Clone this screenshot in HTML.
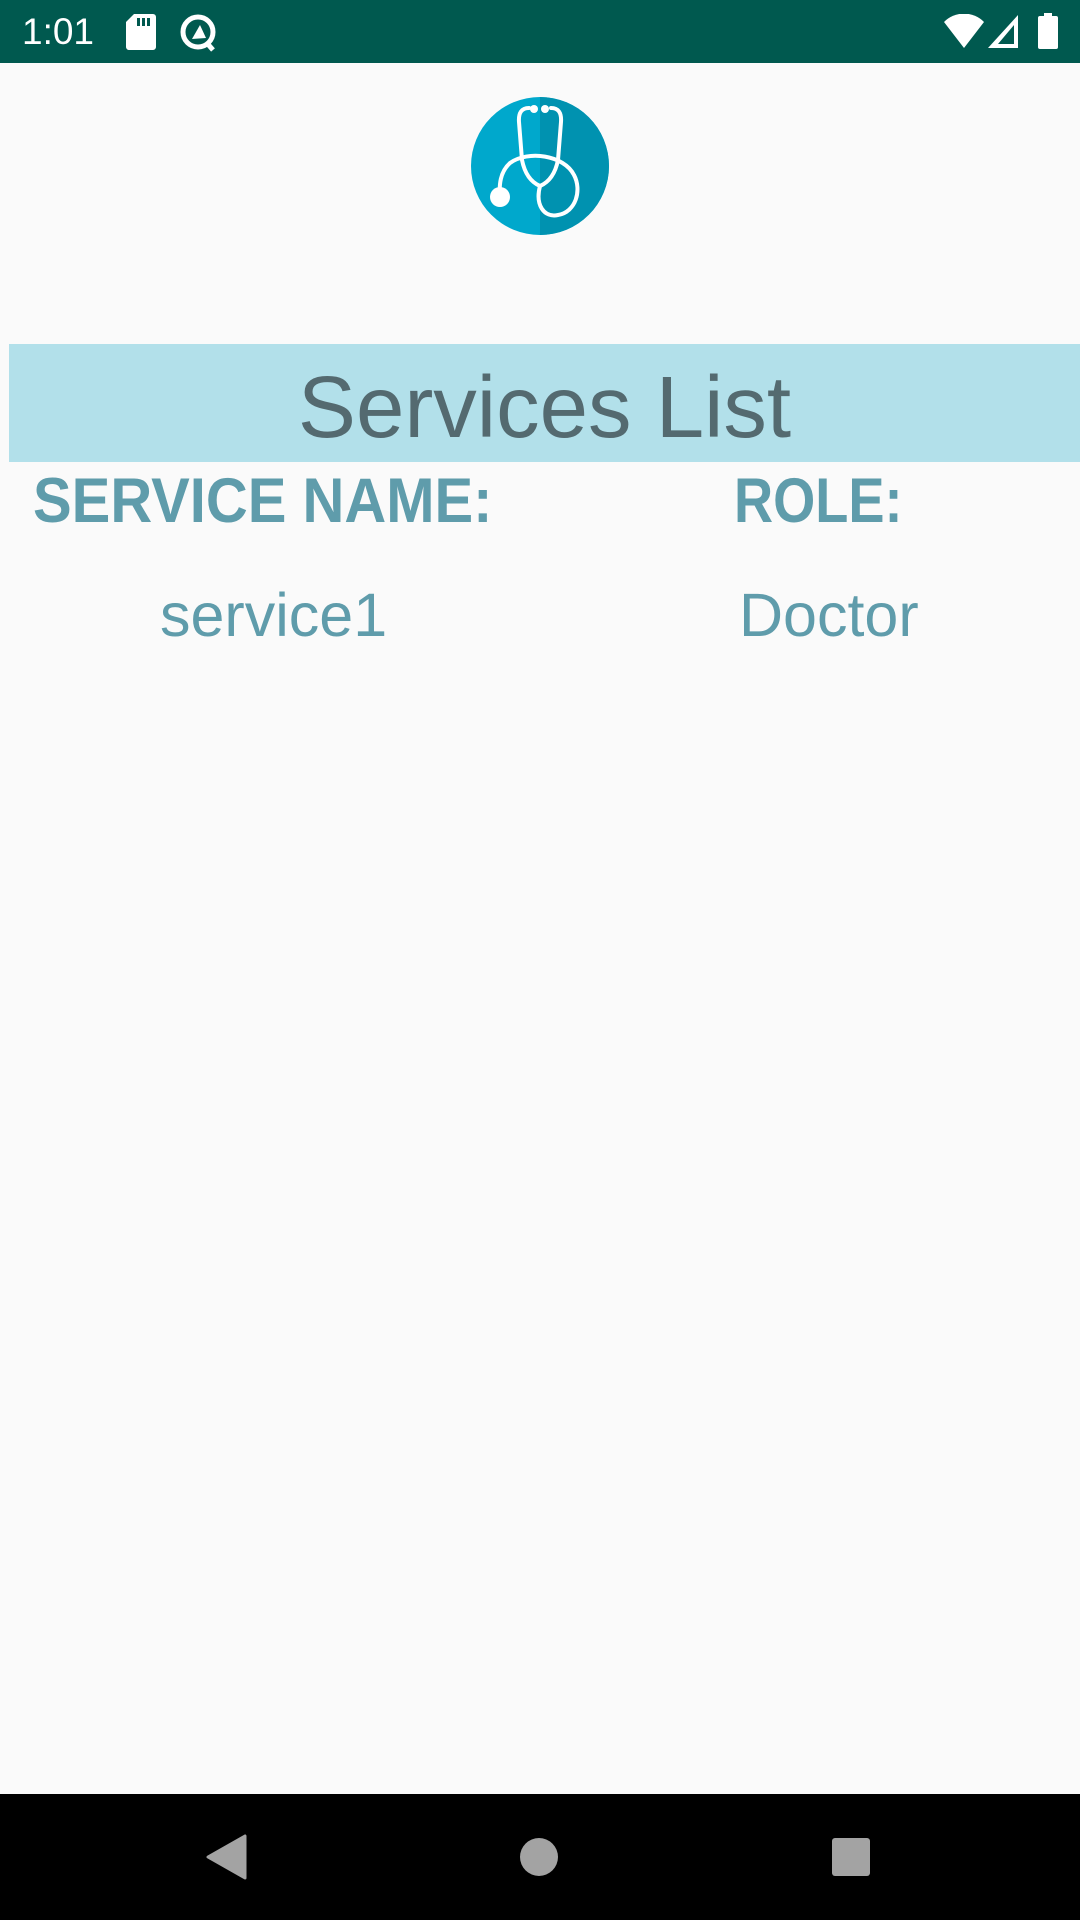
<!DOCTYPE html>
<html><head><meta charset="utf-8"><style>
html,body{margin:0;padding:0;}
body{width:1080px;height:1920px;background:#fafafa;position:relative;overflow:hidden;font-family:"Liberation Sans",sans-serif;}
.sb{position:absolute;left:0;top:0;width:1080px;height:63px;background:#00594f;}
.t{position:absolute;white-space:nowrap;line-height:1;}
.banner{position:absolute;left:9px;top:344px;width:1071px;height:118px;background:#b2e0ea;}
.nav{position:absolute;left:0;top:1794px;width:1080px;height:126px;background:#000;}
</style></head><body>
<div class="sb">
  <div class="t" style="left:22px;top:13px;font-size:37px;color:#fff;">1:01</div>
  <svg style="position:absolute;left:126px;top:14px" width="30" height="36" viewBox="0 0 30 36"><path d="M8 0H27a3 3 0 0 1 3 3V33a3 3 0 0 1-3 3H3a3 3 0 0 1-3-3V8Z" fill="#fff"/><rect x="11" y="4" width="3" height="8" fill="#00594f"/><rect x="16" y="4" width="3" height="8" fill="#00594f"/><rect x="21" y="4" width="3" height="8" fill="#00594f"/></svg>
  <svg style="position:absolute;left:178px;top:12px" width="40" height="40" viewBox="0 0 40 40"><circle cx="20" cy="20" r="15" fill="none" stroke="#fff" stroke-width="5"/><path d="M14 27L22 13L28 26Z" fill="#fff"/><path d="M28 30L35 38" stroke="#fff" stroke-width="5"/></svg>
  <svg style="position:absolute;left:944px;top:14px" width="40" height="34" viewBox="0 0 40 34"><path d="M0 8A28 28 0 0 1 40 8L20 34Z" fill="#fff"/></svg>
  <svg style="position:absolute;left:988px;top:15px" width="30" height="33" viewBox="0 0 30 33"><path d="M30 0V33H0Z" fill="#fff"/><path d="M26 10V29H10Z" fill="#00594f"/></svg>
  <svg style="position:absolute;left:1038px;top:13px" width="20" height="36" viewBox="0 0 20 36"><rect x="6" y="0" width="8" height="4" fill="#fff"/><rect x="0" y="3" width="20" height="33" rx="2" fill="#fff"/></svg>
</div>

<svg style="position:absolute;left:0;top:0" width="1080" height="300" viewBox="0 0 1080 300">
  <defs><clipPath id="c"><circle cx="540" cy="166" r="69"/></clipPath></defs>
  <circle cx="540" cy="166" r="69" fill="#00a8cc"/>
  <rect x="540" y="90" width="80" height="160" fill="#0092b0" clip-path="url(#c)"/>
  <circle cx="534" cy="109" r="4" fill="#fff"/><circle cx="545" cy="109" r="4" fill="#fff"/>
  <g fill="none" stroke="#fff" stroke-width="4" stroke-linecap="round">
    <path d="M529,108 Q518,108 519,122 L522,160 Q526,180 540,186 Q554,180 558,160 L561,122 Q562,108 551,108"/>
    <path d="M540,186 C535,205 544,218 558,215 C576,212 582,190 574,175 C564,155 528,150 510,163 C500,172 499,185 500,197"/>
  </g>
  <circle cx="500" cy="197" r="10" fill="#fff"/>
</svg>

<div class="banner"></div>
<div class="t" style="left:0;width:1089px;text-align:center;top:364px;font-size:87px;color:#546a70;">Services List</div>
<div class="t" style="left:33px;top:470px;font-size:63px;font-weight:bold;color:#5f9cab;transform:scaleX(0.92);transform-origin:0 0;">SERVICE NAME:</div>
<div class="t" style="left:734px;top:470px;font-size:63px;font-weight:bold;color:#5f9cab;transform:scaleX(0.86);transform-origin:0 0;">ROLE:</div>
<div class="t" style="left:160px;top:585px;font-size:61px;color:#5f9cab;">service1</div>
<div class="t" style="left:739px;top:585px;font-size:61px;color:#5f9cab;">Doctor</div>

<div class="nav">
  <svg style="position:absolute;left:205px;top:40px" width="42" height="46" viewBox="0 0 42 46"><path d="M40 2V44L3 23Z" fill="#a3a3a3" stroke="#a3a3a3" stroke-width="3" stroke-linejoin="round"/></svg>
  <div style="position:absolute;left:520px;top:44px;width:38px;height:38px;border-radius:50%;background:#a3a3a3"></div>
  <div style="position:absolute;left:832px;top:44px;width:38px;height:38px;border-radius:3px;background:#a3a3a3"></div>
</div>
</body></html>
